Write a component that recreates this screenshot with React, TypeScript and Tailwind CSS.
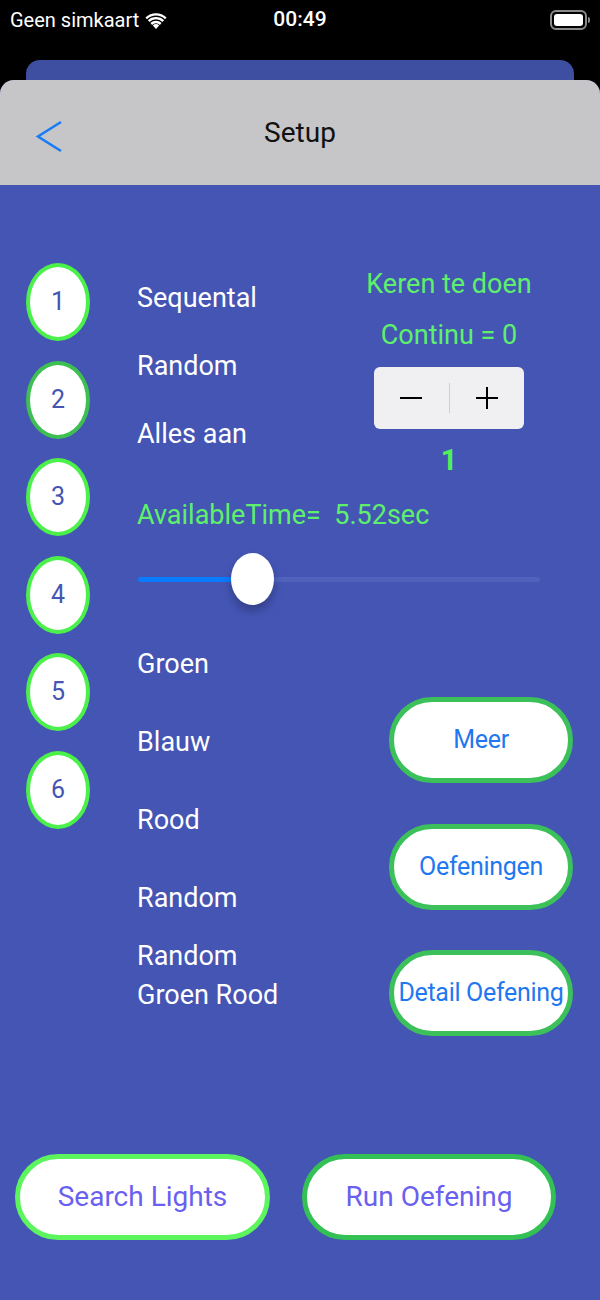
import React from "react";

const font = { fontFamily: "Roboto, 'Noto Sans', sans-serif" };

function Circle({ n, dark }: { n: number; dark?: boolean }) {
  return (
    <div
      className={`flex h-[78px] w-[64px] items-center justify-center rounded-[50%] border-[4px] bg-white text-[25px] text-[#4455b4] ${
        dark ? "border-[#3ebf52]" : "border-[#4cf04b]"
      }`}
    >
      {n}
    </div>
  );
}

function PillButton({ label }: { label: string }) {
  return (
    <button
      type="button"
      className="flex h-[86px] w-[184px] items-center justify-center rounded-[43px] border-[5px] border-[#3cc05a] bg-white text-[25px] tracking-[-0.3px] text-[#1f78f0]"
    >
      {label}
    </button>
  );
}

export default function App() {
  return (
    <div className="flex min-h-[1300px] w-[600px] flex-col bg-black" style={font}>
      {/* status bar */}
      <div className="flex h-[40px] items-center justify-between px-[10px] text-white">
        <div className="flex w-[200px] items-center gap-[6px] text-[20px]">
          <span>Geen simkaart</span>
          <svg width="22" height="17" viewBox="0 0 22 17" fill="white">
            <path d="M11 17l-3.2-3.6a4.6 4.6 0 0 1 6.4 0z" />
            <path d="M5.4 11A8 8 0 0 1 16.6 11l-1.7 1.9a5.5 5.5 0 0 0-7.8 0z" />
            <path d="M2.9 8.2a11.6 11.6 0 0 1 16.2 0l-1.6 1.8a9.2 9.2 0 0 0-13 0z" />
            <path d="M0.4 5.4a15.3 15.3 0 0 1 21.2 0l-1.6 1.8a12.9 12.9 0 0 0-18 0z" />
          </svg>
        </div>
        <span className="text-[21px] font-medium">00:49</span>
        <div className="flex w-[200px] justify-end">
          <div className="flex items-center">
            <div className="flex h-[20px] w-[37px] items-center rounded-[6px] border-[2px] border-[#8a8a8a] p-[2px]">
              <div className="h-full w-full rounded-[3px] bg-white" />
            </div>
            <div className="ml-[1px] h-[6px] w-[2px] rounded-r-sm bg-[#8a8a8a]" />
          </div>
        </div>
      </div>
      <div className="h-[20px]" />
      <div className="mx-[26px] h-[20px] rounded-t-[14px] bg-[#3e4fa2]" />

      {/* main sheet */}
      <div className="flex flex-1 flex-col overflow-hidden rounded-t-[14px] bg-[#4455b4]">
        <div className="relative flex h-[105px] items-center justify-center bg-[#c6c6c8]">
          <svg
            className="absolute left-[35px] top-[40px]"
            width="28"
            height="33"
            viewBox="0 0 28 33"
            fill="none"
            stroke="#1a7cf5"
            strokeWidth="2.6"
          >
            <path d="M26 2L3 16.5l23 14.5" />
          </svg>
          <span className="text-[28px] text-[#111]">Setup</span>
        </div>

        <div className="flex pt-[78px]">
          <div className="ml-[26px] flex flex-col gap-[19.5px]">
            <Circle n={1} />
            <Circle n={2} dark />
            <Circle n={3} />
            <Circle n={4} />
            <Circle n={5} />
            <Circle n={6} />
          </div>

          <div className="ml-[47px] mt-[1px] flex flex-col">
            <div className="flex">
              <div className="flex w-[227px] flex-col text-[27px] leading-[68px] text-white">
                <span>Sequental</span>
                <span>Random</span>
                <span>Alles aan</span>
              </div>
              <div className="flex w-[170px] flex-col items-center text-[27px] leading-[40px] text-[#5ef06c]">
                <span>Keren te doen</span>
                <span className="mt-[11px]">Continu = 0</span>
                <div className="mt-[12px] flex h-[62px] w-[150px] items-center rounded-[6px] bg-[#f0f0f2] text-black">
                  <div className="flex flex-1 items-center justify-center">
                    <div className="h-[2px] w-[22px] bg-black" />
                  </div>
                  <div className="h-[30px] w-px bg-[#d0d0d0]" />
                  <div className="flex flex-1 items-center justify-center">
                    <svg width="24" height="24" viewBox="0 0 24 24" stroke="black" strokeWidth="2">
                      <path d="M12 1v22M1 12h22" />
                    </svg>
                  </div>
                </div>
                <span className="mt-[11px] text-[29px] font-bold text-[#4ff05a]">1</span>
              </div>
            </div>

            <span className="mt-[15px] text-[27px] leading-[40px] text-[#5ef06c]">
              AvailableTime=&nbsp; 5.52sec
            </span>

            <div className="relative mt-[18px] h-[52px] w-[403px]">
              <div className="absolute left-[1px] right-0 top-[24px] h-[5px] rounded-full bg-[#5062bb]" />
              <div className="absolute left-[1px] top-[24px] h-[5px] w-[100px] rounded-full bg-[#0a7aff]" />
              <div className="absolute left-[94px] top-0 h-[52px] w-[43px] rounded-[50%] bg-white shadow-[0_6px_10px_rgba(0,0,0,0.25)]" />
            </div>

            <div className="mt-[20px] flex">
              <div className="flex w-[252px] flex-col text-[27px] leading-[78px] text-white">
                <span>Groen</span>
                <span>Blauw</span>
                <span>Rood</span>
                <span>Random</span>
                <span className="leading-[39px]">
                  Random
                  <br />
                  Groen Rood
                </span>
              </div>
              <div className="mt-[72px] flex flex-col gap-[40.5px]">
                <PillButton label="Meer" />
                <PillButton label="Oefeningen" />
                <PillButton label="Detail Oefening" />
              </div>
            </div>
          </div>
        </div>

        <div className="mt-[118px] flex gap-[32px] pl-[15px]">
          <button
            type="button"
            className="flex h-[86px] w-[255px] items-center justify-center rounded-[43px] border-[5px] border-[#5cf55e] bg-white text-[28px] text-[#6a5ff0]"
          >
            Search Lights
          </button>
          <button
            type="button"
            className="flex h-[86px] w-[254px] items-center justify-center rounded-[43px] border-[5px] border-[#33c054] bg-white text-[28px] text-[#6a5ff0]"
          >
            Run Oefening
          </button>
        </div>
      </div>
    </div>
  );
}
